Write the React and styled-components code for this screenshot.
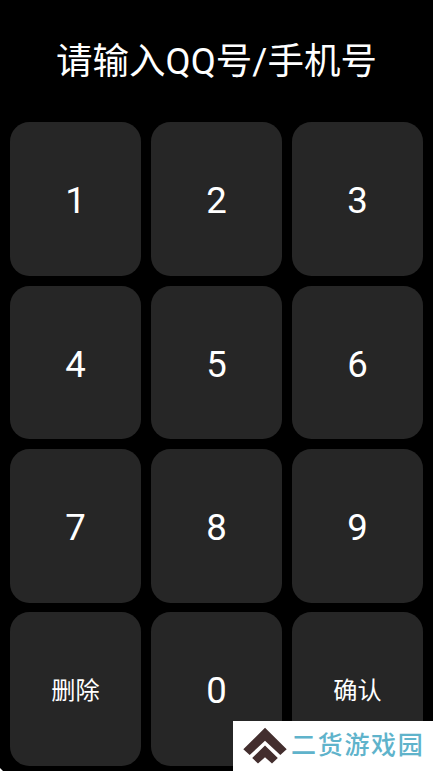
import React from "react";
import styled, { createGlobalStyle } from "styled-components";

const keys = ["1", "2", "3", "4", "5", "6", "7", "8", "9", "删除", "0", "确认"];

function App() {
  return (
    <Screen>
      <GlobalStyle />
      <Title>请输入QQ号/手机号</Title>
      <Keypad>
        {keys.map((key) => (
          <Key key={key} $small={key.length > 1}>
            {key}
          </Key>
        ))}
      </Keypad>
      <Corner />
      <Watermark>
        <Logo />
        <SiteName>二货游戏园</SiteName>
      </Watermark>
    </Screen>
  );
}

function Logo() {
  return (
    <svg width="44" height="38" viewBox="0 0 44 38" fill="#432e2e">
      <path d="M22 0.8L43.7 22.2L37.3 28.1L22 13.8L6.7 28.1L0.3 22.2Z" />
      <path d="M22 18.6L34.8 31L29 36.5L22 30.2L15 36.5L9.2 31Z" />
    </svg>
  );
}

export default App;

const GlobalStyle = createGlobalStyle`
  body {
    margin: 0;
    background: #000;
  }
`;

const Screen = styled.div`
  position: relative;
  display: flex;
  flex-direction: column;
  box-sizing: border-box;
  width: 433px;
  height: 771px;
  padding: 0 9.8px 5px;
  overflow: hidden;
  background: #000;
  color: #fff;
  font-family: Roboto, "Noto Sans CJK SC", sans-serif;
`;

const Title = styled.h1`
  display: flex;
  align-items: center;
  justify-content: center;
  box-sizing: border-box;
  height: 122.4px;
  margin: 0;
  padding-bottom: 6px;
  font-size: 36.5px;
  font-weight: 400;
  white-space: nowrap;
`;

const Keypad = styled.div`
  display: grid;
  flex: 1;
  grid-template-columns: repeat(3, 1fr);
  grid-template-rows: repeat(4, 1fr);
  gap: 9.7px;
`;

const Key = styled.button`
  display: flex;
  align-items: center;
  justify-content: center;
  padding: ${(props) => (props.$small ? "0 0 1px" : "3.5px 0 0")};
  border: 0;
  border-radius: 19.5px;
  background: #262626;
  color: inherit;
  font-family: inherit;
  font-size: ${(props) => (props.$small ? "24.2px" : "36.6px")};
  cursor: pointer;
`;

const Corner = styled.div`
  position: absolute;
  bottom: 0;
  left: 0;
  width: 3px;
  height: 3px;
  background: #fff;
  clip-path: polygon(0 0, 100% 100%, 0 100%);
`;

const Watermark = styled.div`
  position: absolute;
  right: 0;
  bottom: 0;
  display: flex;
  align-items: center;
  box-sizing: border-box;
  width: 200px;
  height: 50px;
  padding: 0 0 1px 10px;
  background: #fff;
`;

const SiteName = styled.span`
  margin-left: 4px;
  color: #5fb3cb;
  font-size: 25px;
  font-weight: 500;
  letter-spacing: 1.7px;
  line-height: 50px;
  white-space: nowrap;
`;
